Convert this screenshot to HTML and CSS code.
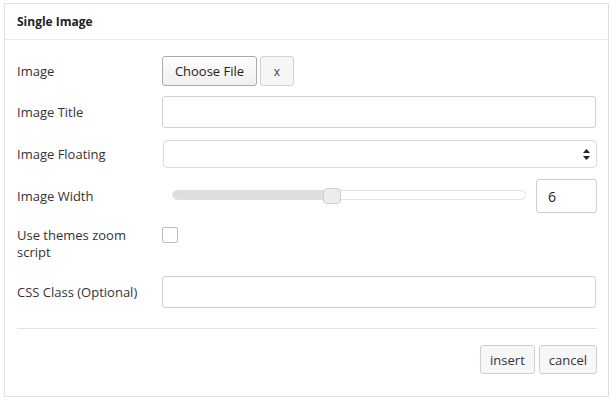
FILE: index.html
```html
<!DOCTYPE html>
<html>
<head>
<meta charset="utf-8">
<link rel="stylesheet" href="styles.css">
</head>
<body>
<div class="panel">
  <div class="panel-head">Single Image</div>
  <div class="panel-body">
    <div class="row row-image">
      <label class="lbl">Image</label>
      <div class="ctrl file-ctrl">
        <button class="btn-file">Choose File</button>
        <button class="btn-x">x</button>
      </div>
    </div>
    <div class="row row-title">
      <label class="lbl">Image Title</label>
      <div class="ctrl"><input class="text-input" type="text"></div>
    </div>
    <div class="row row-float">
      <label class="lbl">Image Floating</label>
      <div class="ctrl">
        <div class="select">
          <span class="select-arrows">
            <svg width="7" height="11" viewBox="0 0 7 11"><path d="M3.5 0 L7 4 L0 4 Z M0 7 L7 7 L3.5 11 Z" fill="#222"/></svg>
          </span>
        </div>
      </div>
    </div>
    <div class="row row-width">
      <label class="lbl">Image Width</label>
      <div class="ctrl slider-ctrl">
        <div class="slider">
          <div class="track"><div class="fill"></div></div>
          <div class="thumb"></div>
        </div>
        <input class="num-input" type="text" value="6">
      </div>
    </div>
    <div class="row row-zoom">
      <label class="lbl">Use themes zoom<br>script</label>
      <div class="ctrl"><span class="checkbox"></span></div>
    </div>
    <div class="row row-css">
      <label class="lbl">CSS Class (Optional)</label>
      <div class="ctrl"><input class="text-input" type="text"></div>
    </div>
    <div class="divider"></div>
    <div class="actions">
      <button class="btn">insert</button>
      <button class="btn">cancel</button>
    </div>
  </div>
</div>
</body>
</html>
```

FILE: styles.css
```css
* { box-sizing: border-box; }
html, body { background: #fff; }
body {
  margin: 3px 0 0 4px;
  font-family: "Open Sans", "Liberation Sans", sans-serif;
  font-size: 13px;
  color: #333;
}
.panel {
  width: 605px;
  height: 394px;
  border: 1px solid #e3e3e3;
  border-right-color: #dcdcdc;
  background: #fff;
}
.panel-head {
  height: 36px;
  padding: 0 12px;
  display: flex;
  align-items: center;
  font-size: 12px;
  font-weight: 700;
  color: #222;
  border-bottom: 1px solid #ebebeb;
}
.panel-body {
  padding: 16px 12px 0 12px;
}
.row {
  display: grid;
  grid-template-columns: 145px 1fr;
  align-items: center;
}
.lbl { line-height: 17px; color: #333; }
.row-image { height: 30px; }
.row-title { height: 32px; margin-top: 10px; }
.row-float { height: 28px; margin-top: 12px; }
.row-width { height: 34px; margin-top: 11px; }
.row-zoom { margin-top: 14px; align-items: start; }
.row-zoom .lbl { padding-top: 0; }
.row-css { height: 32px; margin-top: 15px; }

.file-ctrl { display: flex; gap: 3px; height: 30px; }
.btn-file {
  width: 95px;
  height: 30px;
  border: 1px solid #a9a9a9;
  border-radius: 3px;
  background: linear-gradient(#fefefe, #efefef);
  font-family: inherit;
  font-size: 13px;
  color: #222;
  padding: 0;
}
.btn-x {
  width: 34px;
  height: 30px;
  border: 1px solid #d2d2d2;
  border-radius: 3px;
  background: #f6f6f6;
  font-family: inherit;
  font-size: 12px;
  color: #444;
  padding: 0;
}
.text-input {
  display: block;
  width: 434px;
  height: 32px;
  border: 1px solid #cfcfcf;
  border-radius: 3px;
  background: #fff;
  font-family: inherit;
  font-size: 13px;
  padding: 0 10px;
  outline: none;
}
.select {
  width: 434px;
  height: 28px;
  margin-left: 1px;
  border: 1px solid #dadada;
  border-radius: 4px;
  background: #fff;
  display: flex;
  align-items: center;
  justify-content: flex-end;
  padding-right: 6px;
}
.select-arrows { display: flex; }
.slider-ctrl { display: flex; align-items: center; height: 34px; }
.slider {
  position: relative;
  width: 354px;
  height: 16px;
  margin-left: 10px;
  margin-right: 10px;
}
.track {
  position: absolute;
  left: 0; right: 0; top: 2px;
  height: 10px;
  border: 1px solid #e2e2e2;
  border-radius: 5px;
  background: #fff;
  overflow: hidden;
}
.fill {
  width: 45%;
  height: 100%;
  background: #dedede;
}
.thumb {
  position: absolute;
  left: 151px;
  top: 0;
  width: 18px;
  height: 16px;
  border: 1px solid #cfcfcf;
  border-radius: 4px;
  background: #ececec;
}
.num-input {
  width: 61px;
  height: 34px;
  border: 1px solid #cfcfcf;
  border-radius: 3px;
  padding: 0 11px;
  font-family: inherit;
  font-size: 14px;
  color: #222;
  outline: none;
}
.checkbox {
  display: block;
  width: 16px;
  height: 16px;
  border: 1px solid #bdbdbd;
  border-radius: 2px;
  background: #fff;
}
.divider {
  margin-top: 20px;
  height: 1px;
  background: #e2e2e2;
  width: 580px;
}
.actions {
  margin-top: 16px;
  display: flex;
  justify-content: flex-end;
  gap: 4px;
  width: 580px;
}
.btn {
  height: 29px;
  border: 1px solid #cfcfcf;
  border-radius: 3px;
  background: #f7f7f7;
  font-family: inherit;
  font-size: 13px;
  color: #333;
  padding: 0 9px;
}
```
